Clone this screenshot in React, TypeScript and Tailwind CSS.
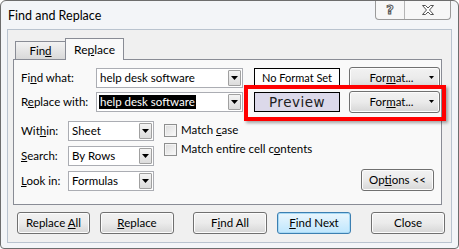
import type { ReactNode } from "react";

const ui = "font-['Lato',sans-serif]";

function Arrow() {
  return (
    <svg width="7" height="4" viewBox="0 0 7 4" className="block">
      <path d="M0 0h7L3.5 4z" fill="#000" />
    </svg>
  );
}

function Combo({ value, width, selected = false }: { value: string; width: string; selected?: boolean }) {
  return (
    <div className={`${width} h-[20px] bg-white border border-[#abadb3] flex items-center pl-[2px] pr-[1px]`}>
      <div className="flex-1 min-w-0 flex items-center">
        <span className={`text-[11.5px] leading-[14px] px-[1px] ${selected ? "bg-black text-white" : "text-black"}`}>
          {value}
        </span>
      </div>
      <div className="w-[13px] h-[16px] border border-[#a0a0a0] rounded-[1px] bg-gradient-to-b from-[#f4f4f4] to-[#dcdcdc] flex items-center justify-center">
        <Arrow />
      </div>
    </div>
  );
}

function Btn({ children, className = "", primary = false }: { children: ReactNode; className?: string; primary?: boolean }) {
  return (
    <div
      className={`h-[22px] rounded-[3px] border flex items-center justify-center text-[11.5px] text-black ${
        primary
          ? "border-[#3c7fb1] bg-gradient-to-b from-[#eaf6fd] to-[#bee6fd] shadow-[inset_0_0_0_1px_#a7d9f5]"
          : "border-[#707070] bg-gradient-to-b from-[#f2f2f2] via-[#ebebeb] to-[#d6d6d6] shadow-[inset_0_0_0_1px_#fcfcfc]"
      } ${className}`}
    >
      <span>{children}</span>
    </div>
  );
}

function FormatBtn() {
  return (
    <Btn className="w-[91px] h-[20px] relative">
      <span className="-ml-[6px]">
        For<u>m</u>at...
      </span>
      <span className="absolute right-[5px] top-[8px]">
        <svg width="5" height="3" viewBox="0 0 5 3" className="block">
          <path d="M0 0h5L2.5 3z" fill="#000" />
        </svg>
      </span>
    </Btn>
  );
}

function Check({ children }: { children: ReactNode }) {
  return (
    <div className="flex items-center h-[16px]">
      <div className="w-[13px] h-[13px] border border-[#8e8f8f] bg-gradient-to-br from-[#dcdcdc] to-[#fafafa] shadow-[inset_0_0_0_1px_#f4f4f4]" />
      <span className="ml-[4px] text-[11.5px] text-black">{children}</span>
    </div>
  );
}

export default function App() {
  return (
    <div className={`${ui} w-[459px] h-[249px] relative bg-[#f3f5f8] border border-[#6d6d6d] rounded-t-[6px] rounded-b-[4px] overflow-hidden`}>
      <div className="h-[28px] flex items-start">
        <div className="pl-[7px] pt-[6px] text-[12.5px] text-black">Find and Replace</div>
        <div className="ml-auto mr-[7px] flex h-[19px] border border-t-0 border-[#9a9a9a] rounded-b-[4px] bg-[#f7f7f7]">
          <div className="w-[28px] flex items-center justify-center text-[13px] font-bold text-transparent [-webkit-text-stroke:1px_#555] font-['DejaVu_Sans',sans-serif]">
            ?
          </div>
          <div className="w-px bg-[#b5b5b5]" />
          <div className="w-[45px] flex items-center justify-center">
            <svg width="14" height="10" viewBox="0 0 14 10">
              <path
                d="M1.5 0.5h3l2.5 2.5 2.5-2.5h3l-4 4.5 4 4.5h-3l-2.5-2.5-2.5 2.5h-3l4-4.5z"
                fill="#fff"
                stroke="#555"
                strokeWidth="1"
              />
            </svg>
          </div>
        </div>
      </div>

      <div className="mx-[6px] h-[214px] bg-[#f0f0f0] border border-[#b9c3cf] flex flex-col">
        {/* tabs */}
        <div className="flex items-end pl-[7px] pt-[7px] h-[29px]">
          <div className="w-[51px] h-[18px] border border-b-0 border-[#898c95] bg-gradient-to-b from-[#f2f2f2] to-[#d9d9d9] flex items-center justify-center text-[11.5px] text-black">
            <span>
              Fin<u>d</u>
            </span>
          </div>
          <div className="w-[59px] h-[22px] -ml-px border border-b-0 border-[#898c95] bg-[#f9f9f9] flex items-center justify-center text-[12px] text-black relative top-px z-10">
            <span>
              Re<u>p</u>lace
            </span>
          </div>
        </div>

        <div className="ml-[5px] w-[429px] h-[146px] border border-[#898c95] bg-[#f9f9f9] pl-[7px] pt-[8px] relative">
          <div className="flex items-center h-[20px]">
            <div className="w-[75px] text-[11.5px] text-black">
              Fi<u>n</u>d what:
            </div>
            <Combo value="help desk software" width="w-[147px]" />
            <div className="ml-[11px] w-[86px] h-[20px] border border-black bg-white flex items-center justify-center text-[11px] text-black">
              No Format Set
            </div>
            <div className="ml-[9px]">
              <FormatBtn />
            </div>
          </div>

          <div className="flex items-center h-[20px] mt-[4px]">
            <div className="w-[75px] text-[11.5px] text-black">
              R<u>e</u>place with:
            </div>
            <Combo value="help desk software" width="w-[147px]" selected />
            <div className="ml-[11px] w-[86px] h-[20px] border border-black bg-[#dcd9ea] flex items-center justify-center text-[13.5px] tracking-[0.5px] text-[#202020] font-['DejaVu_Sans',sans-serif]">
              Preview
            </div>
            <div className="ml-[9px]">
              <FormatBtn />
            </div>
          </div>

          <div className="flex mt-[9px]">
            <div className="flex flex-col gap-[5px]">
              <div className="flex items-center h-[20px]">
                <div className="w-[47px] text-[11.5px] text-black">
                  Wit<u>h</u>in:
                </div>
                <Combo value="Sheet" width="w-[86px]" />
              </div>
              <div className="flex items-center h-[20px]">
                <div className="w-[47px] text-[11.5px] text-black">
                  <u>S</u>earch:
                </div>
                <Combo value="By Rows" width="w-[86px]" />
              </div>
              <div className="flex items-center h-[20px]">
                <div className="w-[47px] text-[11.5px] text-black">
                  <u>L</u>ook in:
                </div>
                <Combo value="Formulas" width="w-[86px]" />
              </div>
            </div>
            <div className="ml-[10px] flex flex-col gap-[3px] pt-[1px]">
              <Check>
                Match <u>c</u>ase
              </Check>
              <Check>
                Match entire cell c<u>o</u>ntents
              </Check>
            </div>
            <div className="ml-auto mr-[7px] self-end">
              <Btn className="w-[73px] h-[21px]">
                Op<u>t</u>ions &lt;&lt;
              </Btn>
            </div>
          </div>
        </div>

        <div className="flex mt-[7px] pl-[9px]">
          <Btn className="w-[73px]">
            Replace <u>A</u>ll
          </Btn>
          <Btn className="w-[74px] ml-[10px]">
            <u>R</u>eplace
          </Btn>
          <Btn className="w-[74px] ml-[19px]">
            F<u>i</u>nd All
          </Btn>
          <Btn className="w-[74px] ml-[10px]" primary>
            <u>F</u>ind Next
          </Btn>
          <Btn className="w-[74px] ml-[20px]">Close</Btn>
        </div>
      </div>

      {/* highlight annotation */}
      <div className="absolute left-[243px] top-[84px] w-[202px] h-[36px] border-[4px] border-[#ff0000] shadow-[2px_2px_3px_rgba(0,0,0,0.35)]" />
    </div>
  );
}
